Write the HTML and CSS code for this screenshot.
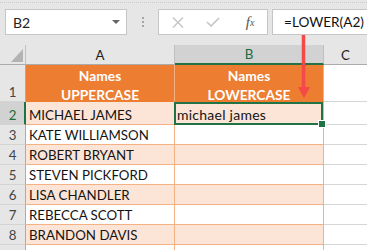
FILE: index.html
```html
<!DOCTYPE html>
<html>
<head>
<meta charset="utf-8">
<link rel="stylesheet" href="styles.css">
</head>
<body>
<div class="app">
  <div class="toolbar">
    <div class="topline"></div>
    <div class="bar">
      <div class="namebox"><span class="ref">B2</span><span class="caret"></span></div>
      <div class="grip"><i></i><i></i><i></i></div>
      <div class="fbuttons">
        <span class="fbtn"><svg width="12" height="11" viewBox="0 0 12 11"><path d="M1 0.5 L11 10.5 M11 0.5 L1 10.5" stroke="#c4c4c4" stroke-width="1.3" fill="none"/></svg></span>
        <span class="fbtn"><svg width="14" height="10" viewBox="0 0 14 10"><path d="M1 5 L5 9 L13 1" stroke="#c4c4c4" stroke-width="1.6" fill="none"/></svg></span>
        <span class="fbtn fx">f<sub>x</sub></span>
      </div>
      <div class="formula">=LOWER(A2)</div>
    </div>
  </div>

  <div class="sheet">
    <div class="corner"><span class="tri"></span></div>
    <div class="ch">A</div>
    <div class="ch sel">B</div>
    <div class="ch last">C</div>

    <div class="rh tall">1</div>
    <div class="c head">Names<br>UPPERCASE</div>
    <div class="c head">Names<br>LOWERCASE</div>
    <div class="c plain"></div>

    <div class="rh sel">2</div>
    <div class="c band">MICHAEL JAMES</div>
    <div class="c band active"><span class="lower">michael james</span><span class="handle"></span></div>
    <div class="c plain"></div>

    <div class="rh">3</div>
    <div class="c">KATE WILLIAMSON</div>
    <div class="c"></div>
    <div class="c plain"></div>

    <div class="rh">4</div>
    <div class="c band">ROBERT BRYANT</div>
    <div class="c band"></div>
    <div class="c plain"></div>

    <div class="rh">5</div>
    <div class="c">STEVEN PICKFORD</div>
    <div class="c"></div>
    <div class="c plain"></div>

    <div class="rh">6</div>
    <div class="c band">LISA CHANDLER</div>
    <div class="c band"></div>
    <div class="c plain"></div>

    <div class="rh">7</div>
    <div class="c">REBECCA SCOTT</div>
    <div class="c"></div>
    <div class="c plain"></div>

    <div class="rh">8</div>
    <div class="c band">BRANDON DAVIS</div>
    <div class="c band"></div>
    <div class="c plain"></div>

    <div class="rh"></div>
    <div class="c"></div>
    <div class="c"></div>
    <div class="c plain"></div>
  </div>

  <svg class="arrow" width="16" height="66" viewBox="0 0 16 66">
    <line x1="7.5" y1="0" x2="7.5" y2="55" stroke="#f54848" stroke-width="3.5"/>
    <polygon points="2,52 14,52 8,63" fill="#f54848"/>
  </svg>
</div>
</body>
</html>
```

FILE: styles.css
```css
* { box-sizing: border-box; }
html, body { margin: 0; padding: 0; background: #ffffff; }
body {
  width: 367px;
  height: 250px;
  overflow: hidden;
  font-family: "Lato", "Liberation Sans", sans-serif;
  font-size: 13.3px;
  color: #141414;
}
.app { position: relative; width: 367px; height: 250px; overflow: hidden; }

/* toolbar */
.toolbar {
  height: 45px;
  background: #e6e6e6;
  padding-top: 2px;
}
.topline {
  height: 1px;
  border-top: 1px dotted #c9c9c9;
  margin: 0 0 6px 0;
}
.bar {
  display: flex;
  height: 26px;
}
.namebox {
  margin-left: 5px;
  width: 122px;
  height: 26px;
  background: #fff;
  border: 1px solid #c6c6c6;
  display: flex;
  align-items: center;
  justify-content: space-between;
  padding: 0 6px 0 7px;
  font-size: 14px;
  color: #222;
}
.caret {
  width: 0; height: 0;
  border-left: 4px solid transparent;
  border-right: 4px solid transparent;
  border-top: 4px solid #666;
}
.grip {
  width: 31px;
  display: flex;
  flex-direction: column;
  align-items: center;
  justify-content: center;
  gap: 2px;
}
.grip i { display: block; width: 2px; height: 2px; background: #a6a6a6; }
.fbuttons {
  width: 110px;
  background: #fff;
  border: 1px solid #c6c6c6;
  display: flex;
  align-items: center;
  padding-left: 1px;
}
.fbtn {
  width: 36px;
  display: flex;
  align-items: center;
  justify-content: center;
}
.fx {
  font-family: "Liberation Serif", serif;
  font-style: italic;
  font-size: 15px;
  color: #555;
  padding-left: 2px;
}
.fx sub { font-size: 10px; vertical-align: -1px; }
.formula {
  flex: 1;
  margin-left: 4px;
  background: #fff;
  border: 1px solid #c6c6c6;
  border-right: none;
  display: flex;
  align-items: center;
  padding-left: 11px;
  font-size: 13.6px;
  color: #111;
}

/* sheet */
.sheet {
  display: grid;
  grid-template-columns: 26px 149px 149px 1fr;
  grid-template-rows: 20px 37px 23px repeat(6, 20px) 20px;
}
.corner {
  background: #e6e6e6;
  border-right: 1px solid #c0c0c0;
  border-bottom: 1px solid #ababab;
  display: flex;
  align-items: flex-end;
  justify-content: flex-end;
  padding: 0 2px 2px 0;
}
.tri {
  width: 12px;
  height: 13px;
  background: #b3b3b3;
  clip-path: polygon(100% 0, 100% 100%, 0 100%);
}
.ch {
  background: #e6e6e6;
  border-right: 1px solid #c0c0c0;
  border-bottom: 1px solid #ababab;
  display: flex;
  align-items: center;
  justify-content: center;
  line-height: 18px;
  color: #222;
}
.ch.sel {
  background: #d2d2d2;
  border-bottom: 2px solid #217346;
  color: #1d6b3f;
}
.ch.last { border-right: none; }
.rh {
  background: #e6e6e6;
  border-right: 1px solid #ababab;
  border-bottom: 1px solid #d3d3d3;
  display: flex;
  align-items: flex-end;
  justify-content: center;
  line-height: 18px;
  color: #444;
}
.rh.sel {
  background: #d2d2d2;
  border-right: 2px solid #217346;
  color: #1d6b3f;
  padding-left: 1px;
}
.c {
  background: #fff;
  border-right: 1px solid #f4b183;
  border-bottom: 1px solid #f4b183;
  display: flex;
  align-items: flex-end;
  padding-left: 3px;
  line-height: 18px;
  white-space: nowrap;
}
.c.band { background: #fce4d6; }
.c.head {
  background: #ed7d31;
  border-bottom-color: #ed7d31;
  border-right-color: #f4b183;
  color: #fff;
  font-weight: 700;
  font-size: 13.8px;
  align-items: flex-start;
  justify-content: center;
  text-align: center;
  padding-left: 0;
  line-height: 19px;
  padding-top: 1px;
}
.c.plain {
  border-right: none;
  border-bottom: 1px solid #d6d6d6;
}
.c.active { position: relative; padding-left: 2px; }
.lower { font-size: 14px; letter-spacing: 0.25px; }
.c.active::after {
  content: "";
  position: absolute;
  top: 0; left: -1px; right: 0; bottom: -1px;
  border: 2px solid #217346;
  pointer-events: none;
}
.handle {
  position: absolute;
  right: -2px;
  bottom: -3px;
  width: 6px;
  height: 6px;
  background: #217346;
  outline: 1px solid #fff;
  z-index: 2;
}
.arrow {
  position: absolute;
  left: 296px;
  top: 35px;
}
```
